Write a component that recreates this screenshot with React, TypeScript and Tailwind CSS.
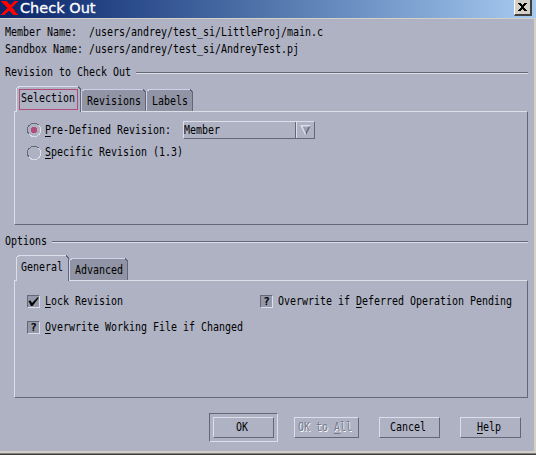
import React from "react";

type TextProps = { children: string; mnemonic?: number; className?: string };

function Txt({ children, mnemonic, className = "" }: TextProps) {
  const m = mnemonic ?? -1;
  return (
    <span className={`block h-[17px] shrink-0 whitespace-pre ${className}`} style={{ width: children.length * 6 }}>
      <span className="block w-max origin-left scale-x-[0.8305] font-['DejaVu_Sans_Mono',monospace] text-[12px] leading-[17px]">
        {m < 0 ? (
          children
        ) : (
          <>
            {children.slice(0, m)}
            <span className="inline-block h-[15px] border-b border-current leading-[17px]">{children[m]}</span>
            {children.slice(m + 1)}
          </>
        )}
      </span>
    </span>
  );
}

function GroupTitle({ children }: { children: string }) {
  return (
    <div className="flex h-[17px] items-center pl-[5px] pr-[6px]">
      <Txt>{children}</Txt>
      <div className="ml-[5px] h-[2px] flex-1 border-b border-t border-b-[#dcdfea] border-t-[#646876]" />
    </div>
  );
}

function Tab({ label, width, active, focused }: { label: string; width: number; active?: boolean; focused?: boolean }) {
  const h = active ? 26 : 22;
  const w = width;
  return (
    <div className={`relative flex shrink-0 justify-center ${active ? "z-10 -mb-px h-[26px] pr-[1px]" : "h-[22px]"}`} style={{ width }}>
      <svg className="absolute inset-0" width={w} height={h} shapeRendering="crispEdges">
        <path d={`M0 ${h}V3H1V1H3V0H${w - 3}V1H${w - 1}V3H${w}V${h}Z`} fill={active ? "#aeb2c3" : "#9094a4"} />
        <path d={`M0 ${h}V2H1V1H2V0H${w - 3}V1H3V2H1V${h}Z`} fill={active ? "#dcdfea" : "#cdd1ea"} />
        <path d={`M${w - 3} 0H${w - 2}V1H${w - 1}V2H${w}V${h}H${w - 1}V3H${w - 2}V2H${w - 3}Z`} fill="#646876" />
      </svg>
      {focused && <div className="absolute bottom-[2px] left-[3px] right-[3px] top-[3px] border border-[#b24d7a]" />}
      <Txt className="relative mt-[4px]">{label}</Txt>
    </div>
  );
}

function Radio({ checked }: { checked?: boolean }) {
  return (
    <svg width="14" height="14" viewBox="0 0 14 14" className="shrink-0" shapeRendering="crispEdges">
      <path d="M2.5 11.5L.5 9V5L2 2.5L5 .5H9L11.5 2" fill="none" stroke="#646876" />
      <path d="M11.5 2L13.5 5V9L12 11.5L9 13.5H5L2.5 11.5" fill="none" stroke="#dcdfea" />
      {checked && <path d="M5 4H9V5H10V9H9V10H5V9H4V5H5Z" fill="#b24d7a" />}
    </svg>
  );
}

function Check({ state }: { state: "on" | "unknown" }) {
  return (
    <div className="flex size-[13px] shrink-0 items-center justify-center border border-b-[#dcdfea] border-l-[#646876] border-r-[#dcdfea] border-t-[#646876] bg-[#9498a8]">
      {state === "on" ? (
        <svg width="11" height="11" viewBox="0 0 11 11">
          <path d="M.5 5L2.5 4.5L4 7L9.5 1.5L11 1.5L4.5 10H3Z" fill="#000" />
        </svg>
      ) : (
        <span className="font-['DejaVu_Sans_Mono',monospace] text-[11px] font-bold leading-[11px]">?</span>
      )}
    </div>
  );
}

const raised = "border border-b-[#646876] border-l-[#dcdfea] border-r-[#646876] border-t-[#dcdfea]";

function Button({ label, mnemonic, className = "" }: { label: string; mnemonic?: number; className?: string }) {
  return (
    <button className={`flex h-[21px] items-center justify-center pr-[3px] ${raised} ${className}`}>
      <Txt mnemonic={mnemonic}>{label}</Txt>
    </button>
  );
}

export default function App() {
  return (
    <div className="flex h-[455px] w-[536px] flex-col overflow-hidden bg-[#aeb2c3] text-black">
      <header className="flex h-[18px] shrink-0 bg-linear-to-r from-[#0a246a] to-[#a6caf0] to-[534px]">
        <svg width="17" height="14" viewBox="0 0 17 14" className="ml-px mt-px shrink-0" shapeRendering="crispEdges">
          <path d="M0 0H5L9 4L14 0H17L11 6L17 14H12L8 9L3 14H0L6 7Z" fill="#f00" />
        </svg>
        <h1 className="ml-[2px] h-[18px] w-[494px] whitespace-nowrap font-['DejaVu_Sans',sans-serif] text-[14.5px] leading-[17px] text-white [-webkit-text-stroke:0.3px_white]">Check Out</h1>
        <button className="flex h-[16px] w-[18px] shrink-0 items-center justify-center border-b-2 border-l border-r-2 border-b-[#404040] border-l-white border-r-[#404040] bg-[#d4d0c8]">
          <svg width="9" height="8" viewBox="0 0 9 8" shapeRendering="crispEdges">
            <path d="M0 0H3V1H4V2H5V1H6V0H9V1H8V2H7V3H6V5H7V6H8V7H9V8H6V7H5V6H4V7H3V8H0V7H1V6H2V5H3V3H2V2H1V1H0Z" />
          </svg>
        </button>
      </header>

      <main className="h-[433px] shrink-0 border-r-2 border-t border-[#d4d0c8]">
        <div className="pl-[5px] pt-[5px]">
          <Txt>{"Member Name:  /users/andrey/test_si/LittleProj/main.c"}</Txt>
          <Txt>{"Sandbox Name: /users/andrey/test_si/AndreyTest.pj"}</Txt>
        </div>

        <section className="mt-[6px]">
          <GroupTitle>Revision to Check Out</GroupTitle>
          <div className="mt-[5px] flex h-[25px] items-end pl-[16px]">
            <Tab label="Selection" width={65} active focused />
            <Tab label="Revisions" width={65} />
            <Tab label="Labels" width={47} />
          </div>
          <div className={`ml-[14px] h-[114px] w-[514px] pl-[12px] pt-[9px] ${raised}`}>
            <div className="flex h-[18px] items-center">
              <Radio checked />
              <Txt mnemonic={0} className="ml-[4px]">Pre-Defined Revision:</Txt>
              <div className={`ml-[12px] flex h-[18px] w-[132px] ${raised}`}>
                <div className="flex w-[112px] items-center border-r border-[#646876]">
                  <Txt>Member</Txt>
                </div>
                <div className="flex flex-1 items-center justify-center border-l border-[#dcdfea]">
                  <svg width="11" height="11" viewBox="0 0 11 11">
                    <path d="M0 0H11L5.5 11Z" fill="#9ca0b0" />
                    <path d="M11 0L5.5 11L5 9L9 1Z" fill="#646876" />
                    <path d="M0 0H11L10 1.5H2.5L6 9L5.5 11Z" fill="#dcdfea" />
                  </svg>
                </div>
              </div>
            </div>
            <div className="mt-[5px] flex h-[17px] items-center">
              <Radio />
              <Txt mnemonic={0} className="ml-[4px]">Specific Revision (1.3)</Txt>
            </div>
          </div>
        </section>

        <section className="mt-[8px]">
          <GroupTitle>Options</GroupTitle>
          <div className="mt-[5px] flex h-[25px] items-end pl-[16px]">
            <Tab label="General" width={53} active />
            <Tab label="Advanced" width={59} />
          </div>
          <div className={`ml-[14px] h-[118px] w-[514px] pl-[12px] pt-[12px] ${raised}`}>
            <div className="flex h-[17px] items-center">
              <Check state="on" />
              <Txt mnemonic={0} className="ml-[5px]">Lock Revision</Txt>
              <div className="ml-[137px] flex items-center">
                <Check state="unknown" />
                <Txt mnemonic={13} className="ml-[5px]">Overwrite if Deferred Operation Pending</Txt>
              </div>
            </div>
            <div className="mt-[9px] flex h-[17px] items-center">
              <Check state="unknown" />
              <Txt mnemonic={0} className="ml-[5px]">Overwrite Working File if Changed</Txt>
            </div>
          </div>
        </section>

        <footer className="mt-[15px] flex items-center pl-[209px]">
          <div className="h-[29px] w-[69px] border border-b-[#dcdfea] border-l-[#646876] border-r-[#dcdfea] border-t-[#646876] p-[3px]">
            <Button label="OK" className="w-[61px]" />
          </div>
          <Button label="OK to All" mnemonic={6} className="ml-[16px] w-[65px] text-[#74788c] [text-shadow:1px_1px_0_#ffffff]" />
          <Button label="Cancel" className="ml-[20px] w-[61px]" />
          <Button label="Help" mnemonic={0} className="ml-[20px] w-[61px]" />
        </footer>
      </main>
      <div className="h-[2px] shrink-0 bg-[#d4d0c8]" />
      <div className="h-[2px] shrink-0 border-t border-[#808080] bg-[#404040]" />
    </div>
  );
}
